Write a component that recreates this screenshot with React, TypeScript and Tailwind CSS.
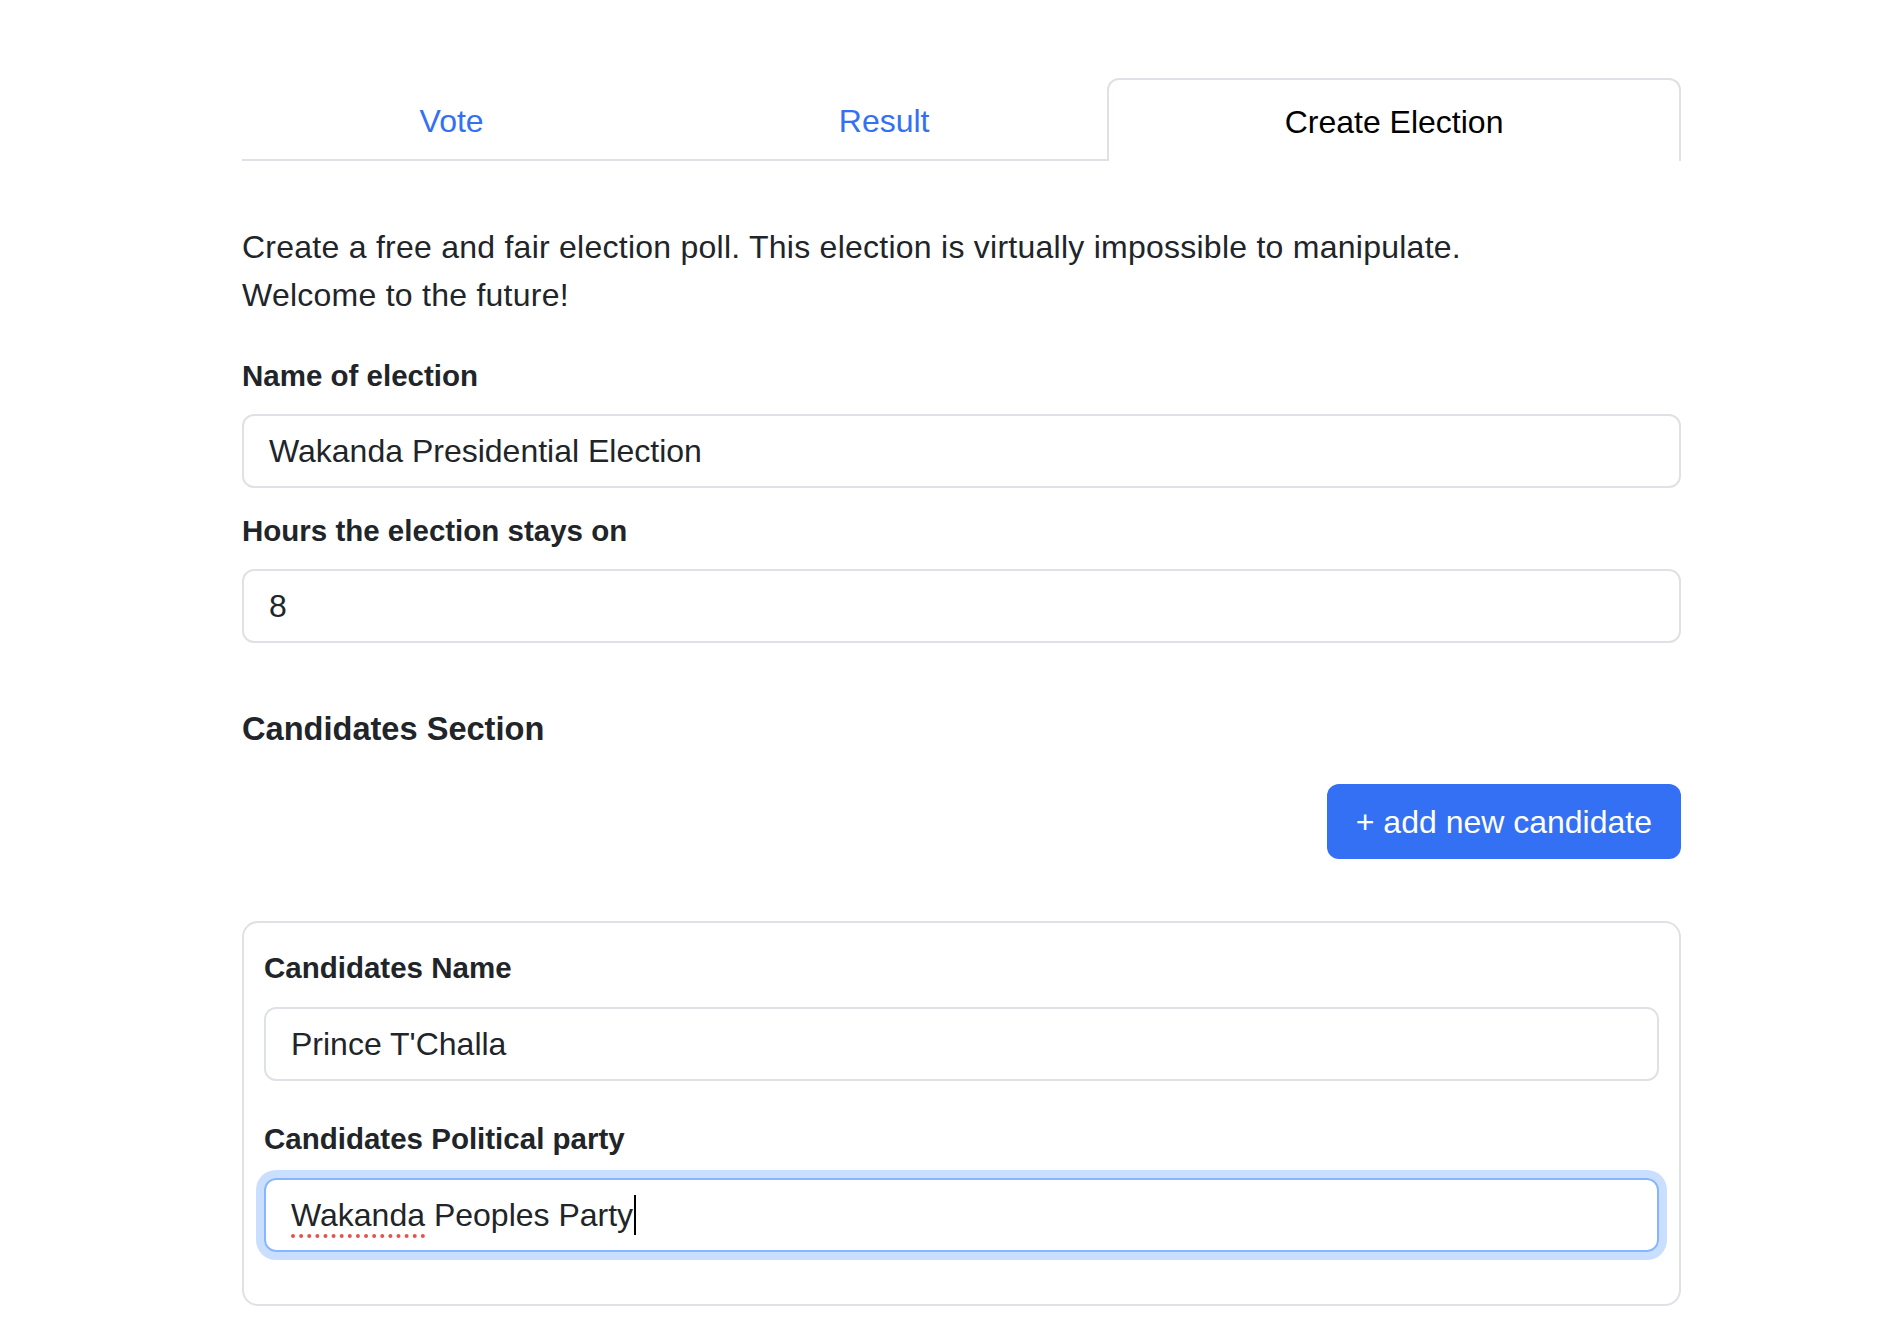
import { useState } from 'react';

const inputBase =
  'block w-full h-[74px] px-[25px] rounded-[12px] border-2 border-[#dee2e6] bg-white text-[32px] leading-[48px] text-[#212529] outline-none';

const labelCls = 'block text-[29.5px] leading-[44px] font-bold text-[#212529]';

const App = () => {
  const [tab, setTab] = useState('create');
  const [name, setName] = useState('Wakanda Presidential Election');
  const [hours, setHours] = useState('8');
  const [candidate, setCandidate] = useState("Prince T'Challa");

  const tabs = [
    { id: 'vote', label: 'Vote' },
    { id: 'result', label: 'Result' },
    { id: 'create', label: 'Create Election' },
  ];

  return (
    <div className="min-h-screen bg-white pt-[78px] font-['Liberation_Sans',Arial,sans-serif] text-[#212529]">
      <div className="ml-[242px] w-[1439px]">
        {/* tabs */}
        <nav className="flex border-b-2 border-[#dee2e6]">
          {tabs.map((t) =>
            t.id === tab ? (
              <button
                key={t.id}
                className="flex-auto h-[83px] -mb-[2px] px-8 pt-[2px] flex items-center justify-center border-2 border-b-0 border-[#dee2e6] rounded-t-[12px] bg-white text-[32px] leading-[48px] text-black"
              >
                {t.label}
              </button>
            ) : (
              <button
                key={t.id}
                onClick={() => setTab(t.id)}
                className="flex-auto h-[81px] px-8 pt-[2px] flex items-center justify-center border-2 border-transparent border-b-0 text-[32px] leading-[48px] text-[#3470f4]"
              >
                {t.label}
              </button>
            )
          )}
        </nav>

        <p className="mt-[62px] text-[32px] leading-[48px] tracking-[0.25px]">
          Create a free and fair election poll. This election is virtually impossible to manipulate.
          <br />
          Welcome to the future!
        </p>

        <label className={labelCls + ' mt-[35px]'}>Name of election</label>
        <input
          className={inputBase + ' mt-[16px]'}
          value={name}
          onChange={(e) => setName(e.target.value)}
        />

        <label className={labelCls + ' mt-[21px]'}>Hours the election stays on</label>
        <input
          className={inputBase + ' mt-[16px]'}
          value={hours}
          onChange={(e) => setHours(e.target.value)}
        />

        <h6 className="mt-[62px] text-[32.6px] leading-[48px] font-bold">Candidates Section</h6>

        <div className="mt-[31px] flex justify-end">
          <button className="h-[75px] px-[29px] rounded-[12px] bg-[#3470f4] text-white text-[32px] leading-[48px]">
            + add new candidate
          </button>
        </div>

        {/* candidate card */}
        <div className="mt-[62px] rounded-[16px] border-2 border-[#dee2e6] px-[20px] pt-[23px] pb-[52px]">
          <label className={labelCls}>Candidates Name</label>
          <input
            className={inputBase + ' mt-[17px]'}
            value={candidate}
            onChange={(e) => setCandidate(e.target.value)}
          />

          <label className={labelCls + ' mt-[36px]'}>Candidates Political party</label>
          <div className="mt-[17px] h-[74px] px-[25px] flex items-center rounded-[12px] border-2 border-[#86b7fe] shadow-[0_0_0_8px_rgba(13,110,253,0.22)] text-[32px] leading-[48px] text-[#212529]">
            <span className="underline decoration-dotted decoration-[#e5534b] decoration-[length:4px] underline-offset-[8px]">
              Wakanda
            </span>
            <span className="whitespace-pre"> Peoples Party</span>
            <span className="ml-[1px] inline-block w-[2px] h-[40px] bg-black" />
          </div>
        </div>
      </div>
    </div>
  );
};

export default App;
